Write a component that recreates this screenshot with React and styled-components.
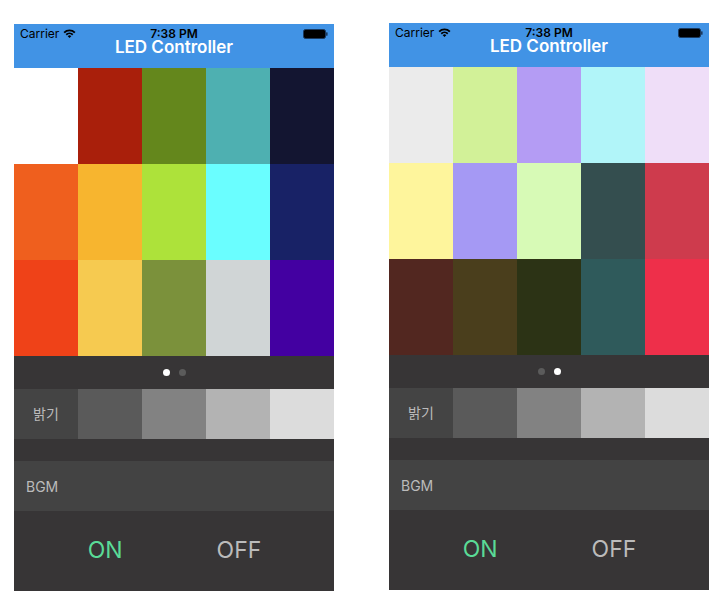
import React from 'react'
import styled, { createGlobalStyle } from 'styled-components'

const GlobalStyle = createGlobalStyle`
  *, *::before, *::after {
    box-sizing: border-box;
  }
  body {
    margin: 0;
    background: #ffffff;
    font-family: Inter, "Noto Sans CJK KR", sans-serif;
  }
`

const StyledRoot = styled.main`
  display: flex;
  align-items: flex-start;
  gap: 55px;
  padding: 23px 0 0 14px;
`

const StyledPhone = styled.section`
  width: 320px;
  margin-top: ${(p) => p.$offset || 0}px;
  display: flex;
  flex-direction: column;
`

const StyledHeader = styled.header`
  position: relative;
  height: 44px;
  background: #4193e5;
  color: #000;
`

const StyledStatus = styled.div`
  display: flex;
  align-items: center;
  justify-content: space-between;
  height: 19px;
  padding: 0 6px;
  font-size: 12px;
  line-height: 11px;
`

const StyledCarrier = styled.div`
  display: flex;
  align-items: center;
  gap: 4px;
  width: 80px;
`

const StyledTime = styled.div`
  font-weight: 600;
`

const StyledBattery = styled.div`
  width: 80px;
  display: flex;
  justify-content: flex-end;
`

const StyledTitle = styled.h1`
  margin: 0;
  position: absolute;
  left: 0;
  right: 0;
  top: 16px;
  text-align: center;
  font-size: 17px;
  line-height: 15px;
  font-weight: 600;
  color: #fff;
`

const StyledGrid = styled.div`
  display: grid;
  grid-template-columns: repeat(5, 64px);
  grid-auto-rows: 96px;
`

const StyledSwatch = styled.div`
  background: ${(p) => p.$color};
`

const StyledPager = styled.div`
  height: 33px;
  background: #373536;
  display: flex;
  align-items: center;
  justify-content: center;
  gap: 9px;
`

const StyledDot = styled.span`
  width: 7px;
  height: 7px;
  border-radius: 50%;
  background: ${(p) => (p.$active ? '#ffffff' : '#5b5b5b')};
`

const StyledBrightness = styled.div`
  display: grid;
  grid-template-columns: repeat(5, 64px);
  height: 50px;
`

const StyledLabel = styled.div`
  background: #444444;
  color: #bbbbbb;
  font-size: 14px;
  display: flex;
  align-items: center;
  justify-content: center;
  padding-bottom: 3px;
`

const StyledSpacer = styled.div`
  height: 22px;
  background: #373536;
`

const StyledBgm = styled.div`
  height: 50px;
  background: #434343;
  color: #bbbbbb;
  font-size: 14px;
  display: flex;
  align-items: center;
  padding: 0 12px;
`

const StyledPower = styled.div`
  height: 80px;
  background: #373536;
  display: flex;
  align-items: center;
  justify-content: center;
  gap: 94px;
  padding: 0 0 2px 1px;
`

const StyledPowerButton = styled.span`
  font-size: 23px;
  font-weight: 400;
  color: ${(p) => (p.$on ? '#5adb97' : '#bbbbbb')};
`

const Wifi = () => (
  <svg width="13" height="9" viewBox="0 0 13 9">
    <path d="M0.5 3 A8.5 8.5 0 0 1 12.5 3 L11.2 4.3 A6.6 6.6 0 0 0 1.8 4.3 Z" fill="#000" />
    <path d="M2.6 5.1 A5.5 5.5 0 0 1 10.4 5.1 L9.1 6.4 A3.6 3.6 0 0 0 3.9 6.4 Z" fill="#000" />
    <path d="M4.7 7.2 A2.6 2.6 0 0 1 8.3 7.2 L6.5 9 Z" fill="#000" />
  </svg>
)

const Battery = () => (
  <svg width="25" height="10" viewBox="0 0 25 10">
    <rect x="0.5" y="0.5" width="22" height="9" rx="2" fill="#000" stroke="#1a3a60" />
    <rect x="23" y="3.2" width="1.6" height="3.6" rx="0.6" fill="#1a3a60" />
  </svg>
)

const pages = [
  [
    '#ffffff', '#a91f0b', '#64871c', '#4eb0b1', '#131531',
    '#ef5f1e', '#f7b52f', '#ade23a', '#6afeff', '#182266',
    '#ef4218', '#f6ca50', '#7b913b', '#d0d5d6', '#4300a1',
  ],
  [
    '#ebebeb', '#d2f198', '#b49cf4', '#b1f5f9', '#efdef8',
    '#fef59c', '#a599f4', '#d7fab6', '#344e4f', '#ce3b4d',
    '#522720', '#4a3e1c', '#2c3315', '#2f5a5b', '#ee2f4a',
  ],
]

const grays = ['#5a5a5a', '#828282', '#b3b3b3', '#dcdcdc']

const Phone = ({ page, offset }) => (
  <StyledPhone $offset={offset}>
    <StyledHeader>
      <StyledStatus>
        <StyledCarrier>
          Carrier <Wifi />
        </StyledCarrier>
        <StyledTime>7:38 PM</StyledTime>
        <StyledBattery>
          <Battery />
        </StyledBattery>
      </StyledStatus>
      <StyledTitle>LED Controller</StyledTitle>
    </StyledHeader>
    <StyledGrid>
      {pages[page].map((c, i) => (
        <StyledSwatch key={i} $color={c} />
      ))}
    </StyledGrid>
    <StyledPager>
      <StyledDot $active={page === 0} />
      <StyledDot $active={page === 1} />
    </StyledPager>
    <StyledBrightness>
      <StyledLabel>밝기</StyledLabel>
      {grays.map((g) => (
        <StyledSwatch key={g} $color={g} />
      ))}
    </StyledBrightness>
    <StyledSpacer />
    <StyledBgm>BGM</StyledBgm>
    <StyledPower>
      <StyledPowerButton $on>ON</StyledPowerButton>
      <StyledPowerButton>OFF</StyledPowerButton>
    </StyledPower>
  </StyledPhone>
)

const App = () => (
  <StyledRoot>
    <GlobalStyle />
    <Phone page={0} offset={1} />
    <Phone page={1} />
  </StyledRoot>
)

export default App
